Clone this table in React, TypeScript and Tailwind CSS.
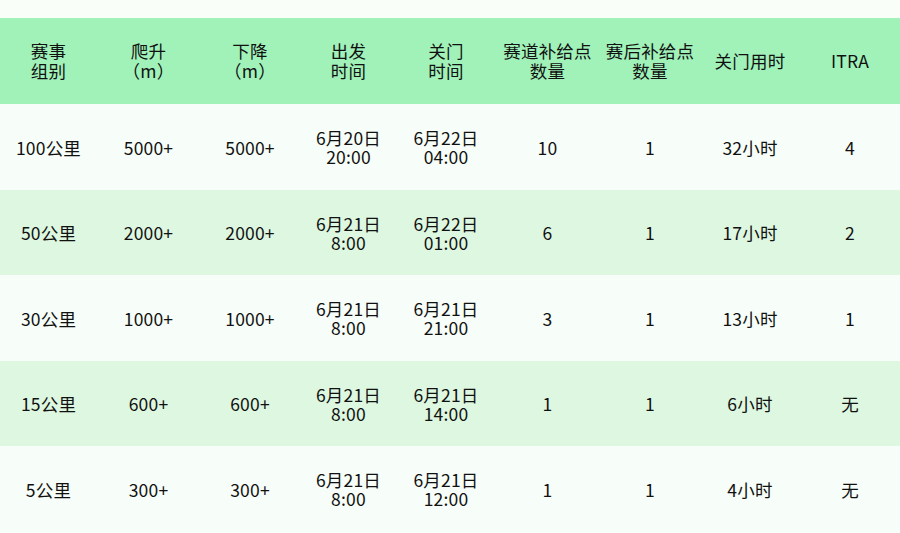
// Race category table — header band plus alternating rows.

const HEADERS = [
  ['赛事', '组别'],
  ['爬升', '（m）'],
  ['下降', '（m）'],
  ['出发', '时间'],
  ['关门', '时间'],
  ['赛道补给点', '数量'],
  ['赛后补给点', '数量'],
  ['关门用时'],
  ['ITRA'],
];

type Row = string[][];

const ROWS: Row[] = [
  [['100公里'], ['5000+'], ['5000+'], ['6月20日', '20:00'], ['6月22日', '04:00'], ['10'], ['1'], ['32小时'], ['4']],
  [['50公里'], ['2000+'], ['2000+'], ['6月21日', '8:00'], ['6月22日', '01:00'], ['6'], ['1'], ['17小时'], ['2']],
  [['30公里'], ['1000+'], ['1000+'], ['6月21日', '8:00'], ['6月21日', '21:00'], ['3'], ['1'], ['13小时'], ['1']],
  [['15公里'], ['600+'], ['600+'], ['6月21日', '8:00'], ['6月21日', '14:00'], ['1'], ['1'], ['6小时'], ['无']],
  [['5公里'], ['300+'], ['300+'], ['6月21日', '8:00'], ['6月21日', '12:00'], ['1'], ['1'], ['4小时'], ['无']],
];

const COL_W = ['w-[97px]', 'w-[103px]', 'w-[100px]', 'w-[97px]', 'w-[98px]', 'w-[105px]', 'w-[100px]', 'w-[100px]', 'w-[100px]'];

function Cell({ lines, col, header }: { lines: string[]; col: number; header?: boolean }) {
  return (
    <div
      className={`flex shrink-0 flex-col items-center justify-center text-center ${COL_W[col]} ${
        header ? 'leading-[20px]' : 'leading-[19px]'
      }`}
    >
      {lines.map((l, i) => (
        <span key={i} className="block whitespace-nowrap">
          {l}
        </span>
      ))}
    </div>
  );
}

export default function App() {
  return (
    <div
      className="h-[533px] w-[900px] overflow-hidden bg-[#f9fef9] text-[17.5px] tracking-[0.2px] text-[#111111]"
      style={{ fontFamily: '"Noto Sans CJK SC", "Noto Sans", sans-serif' }}
    >
      <div className="h-[18px]" />
      <div className="flex h-[86px] bg-[#a0f2b9]">
        {HEADERS.map((h, i) => (
          <Cell key={i} lines={h} col={i} header />
        ))}
      </div>
      {ROWS.map((row, r) => (
        <div
          key={r}
          className={`flex ${r % 2 === 0 ? 'h-[86px] bg-[#f7fdf8]' : 'h-[85px] bg-[#ddf7e0]'}`}
        >
          {row.map((c, i) => (
            <Cell key={i} lines={c} col={i} />
          ))}
        </div>
      ))}
    </div>
  );
}
